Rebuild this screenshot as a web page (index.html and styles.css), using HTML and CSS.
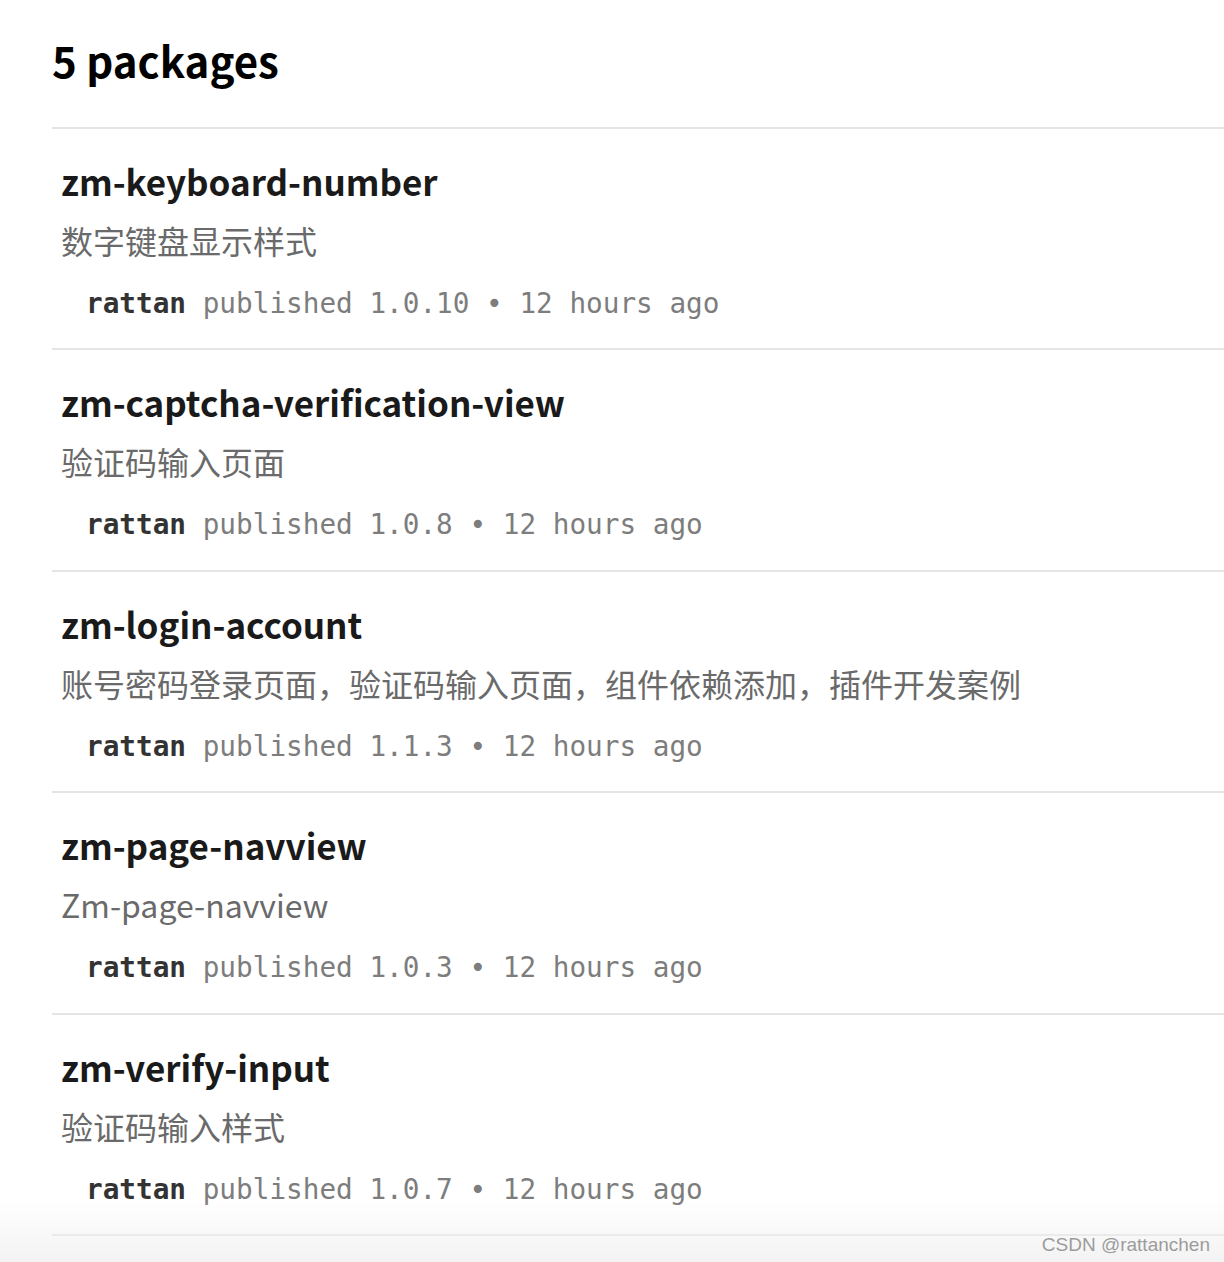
FILE: index.html
```html
<!DOCTYPE html>
<html lang="zh-CN">
<head>
<meta charset="utf-8">
<title>5 packages</title>
<link rel="stylesheet" href="styles.css">
</head>
<body>
<main class="list">
  <h2 class="count">5 packages</h2>
  <ul class="packages">
    <li class="pkg">
      <h3 class="pkg-name">zm-keyboard-number</h3>
      <p class="pkg-desc">数字键盘显示样式</p>
      <p class="pkg-meta"><span class="author">rattan</span> published 1.0.10 • 12 hours ago</p>
    </li>
    <li class="pkg">
      <h3 class="pkg-name">zm-captcha-verification-view</h3>
      <p class="pkg-desc">验证码输入页面</p>
      <p class="pkg-meta"><span class="author">rattan</span> published 1.0.8 • 12 hours ago</p>
    </li>
    <li class="pkg">
      <h3 class="pkg-name">zm-login-account</h3>
      <p class="pkg-desc">账号密码登录页面，验证码输入页面，组件依赖添加，插件开发案例</p>
      <p class="pkg-meta"><span class="author">rattan</span> published 1.1.3 • 12 hours ago</p>
    </li>
    <li class="pkg">
      <h3 class="pkg-name">zm-page-navview</h3>
      <p class="pkg-desc">Zm-page-navview</p>
      <p class="pkg-meta"><span class="author">rattan</span> published 1.0.3 • 12 hours ago</p>
    </li>
    <li class="pkg">
      <h3 class="pkg-name">zm-verify-input</h3>
      <p class="pkg-desc">验证码输入样式</p>
      <p class="pkg-meta"><span class="author">rattan</span> published 1.0.7 • 12 hours ago</p>
    </li>
  </ul>
</main>
<div class="fade"><span class="watermark">CSDN @rattanchen</span></div>
</body>
</html>
```
FILE: styles.css
```css
html, body {
  margin: 0;
  padding: 0;
  background: #ffffff;
}
body {
  font-family: "Noto Sans CJK SC", "Noto Sans", sans-serif;
  overflow: hidden;
  height: 1262px;
  position: relative;
}
.list {
  margin-left: 52px;
}
.count {
  margin: 0;
  padding-top: 24px;
  padding-bottom: 31px;
  font-size: 42px;
  line-height: 72px;
  font-weight: 700;
  color: #000;
}
.packages {
  list-style: none;
  margin: 0;
  padding: 0;
  border-top: 2px solid #e5e5e5;
}
.pkg {
  padding: 26px 0 0 9px;
  height: 193.4px;
  border-bottom: 2px solid #e5e5e5;
}
.pkg-name {
  margin: 0;
  font-size: 35px;
  line-height: 52px;
  font-weight: 700;
  color: #1a1a1a;
}
.pkg-desc {
  margin: 9px 0 0;
  font-size: 32px;
  line-height: 48px;
  color: #6a6a6a;
}
.pkg-meta {
  margin: 20px 0 0 25px;
  font-family: "DejaVu Sans Mono", "Liberation Mono", monospace;
  font-size: 27.7px;
  line-height: 40px;
  color: #7d7d7d;
}
.author {
  font-weight: 700;
  color: #333;
}
.fade {
  position: absolute;
  left: 0;
  right: 0;
  bottom: 0;
  height: 62px;
  background: linear-gradient(to bottom, rgba(246,246,246,0) 0%, rgba(240,240,240,0.8) 100%);
}
.watermark {
  position: absolute;
  right: 14px;
  bottom: 6px;
  font-family: "Liberation Sans", Arial, sans-serif;
  font-size: 19px;
  color: #9c9c9c;
}
```
